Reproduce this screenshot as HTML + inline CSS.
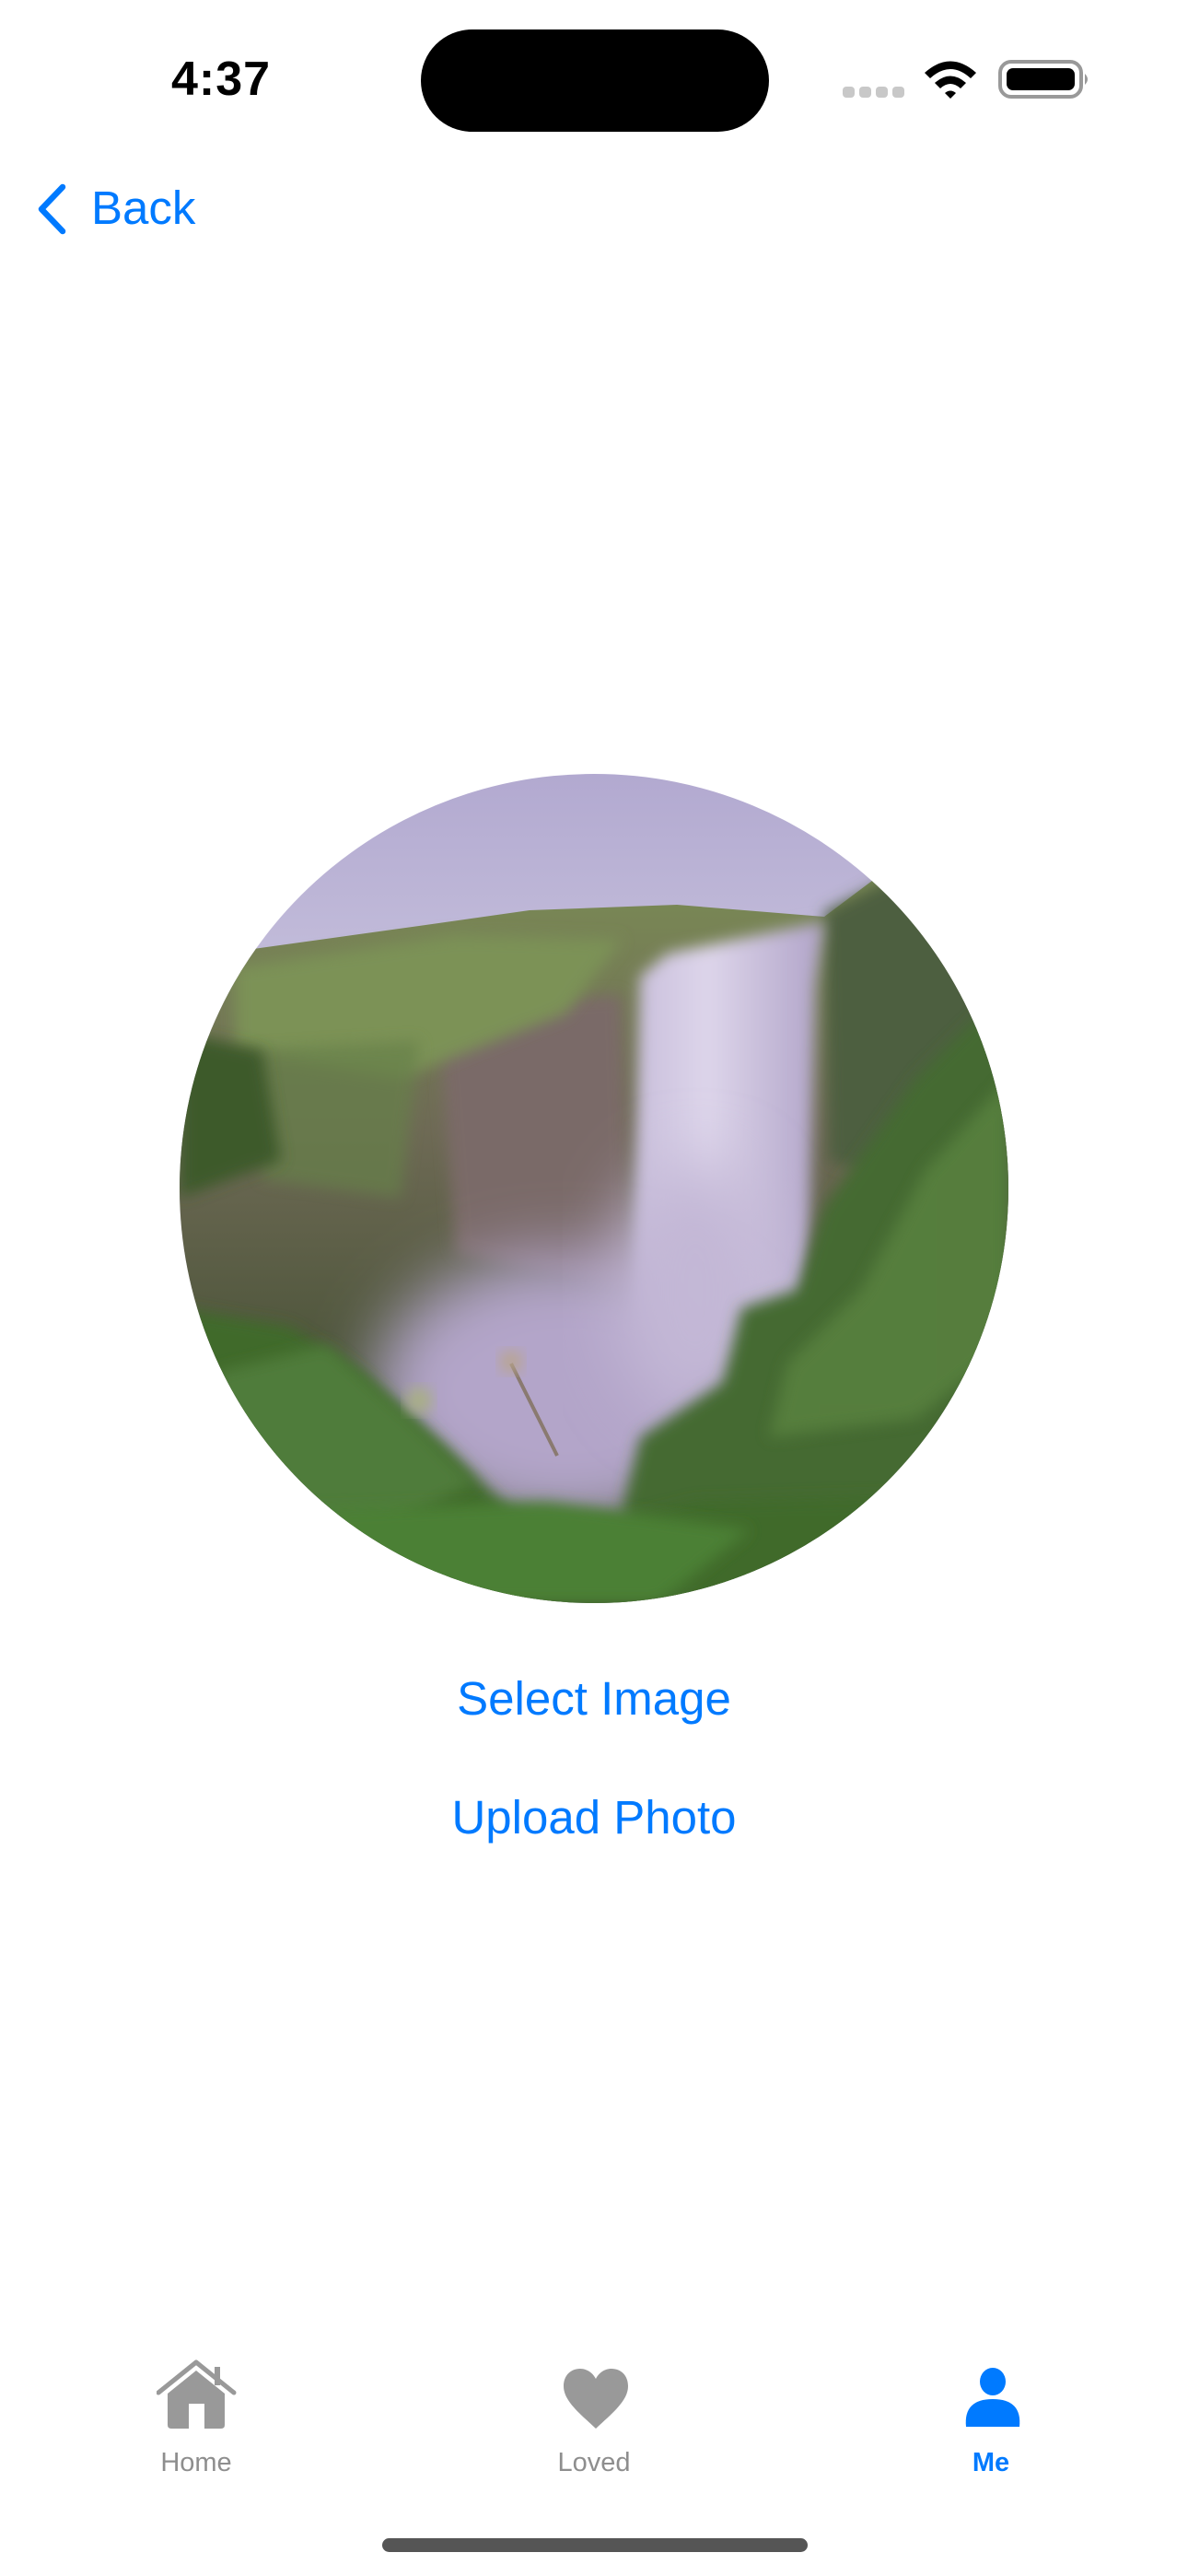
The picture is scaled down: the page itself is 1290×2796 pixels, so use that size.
<!DOCTYPE html>
<html><head><meta charset="utf-8">
<style>
html,body{margin:0;padding:0;background:#fff;}
body{width:1290px;height:2796px;position:relative;overflow:hidden;font-family:"Liberation Sans",sans-serif;}
.abs{position:absolute;}
.blue{color:#007aff;}
</style></head><body>
<div class="abs" style="left:186px;top:56px;font-size:52px;font-weight:bold;letter-spacing:1px;color:#000">4:37</div>
<div class="abs" style="left:457px;top:32px;width:378px;height:111px;border-radius:56px;background:#000"></div>
<svg class="abs" style="left:900px;top:40px" width="300" height="90" viewBox="0 0 300 90">
 <g fill="#c8c8c8"><rect x="15" y="54" width="13" height="12" rx="4"/><rect x="33" y="54" width="13" height="12" rx="4"/><rect x="51" y="54" width="13" height="12" rx="4"/><rect x="69" y="54" width="13" height="12" rx="4"/></g>
 <path d="M104 39 Q132 14 160 39 L154 45 Q132 25 110 45Z" fill="#000"/>
 <path d="M115 50 Q132 35 149 50 L143 56 Q132 46 121 56Z" fill="#000"/>
 <path d="M126 61 Q132 56 138 61 L132 67Z" fill="#000"/>
 <rect x="186" y="27" width="88" height="38" rx="12" fill="none" stroke="#999" stroke-width="4"/>
 <rect x="193" y="34" width="74" height="24" rx="7" fill="#000"/>
 <path d="M278 40 q6 6 0 12z" fill="#999"/>
</svg>
<svg class="abs" style="left:36px;top:198px" width="44" height="60" viewBox="0 0 44 60"><path d="M32 5 L9 29 L32 53" fill="none" stroke="#007aff" stroke-width="6.5" stroke-linecap="round" stroke-linejoin="round"/></svg>
<div class="abs blue" style="left:99px;top:196px;font-size:51px">Back</div>

<svg class="abs" style="left:195px;top:840px" width="900" height="900" viewBox="0 0 900 900">
 <defs>
  <clipPath id="c"><circle cx="450" cy="450" r="450"/></clipPath>
  <filter id="b" x="-20%" y="-20%" width="140%" height="140%"><feGaussianBlur stdDeviation="8"/></filter>
  <filter id="b2" x="-30%" y="-30%" width="160%" height="160%"><feGaussianBlur stdDeviation="35"/></filter>
  <linearGradient id="sky" x1="0" y1="0" x2="0" y2="1"><stop offset="0" stop-color="#b2a9d0"/><stop offset=".25" stop-color="#c4bedb"/><stop offset="1" stop-color="#cfcbdf"/></linearGradient>
  <linearGradient id="wf" x1="0" y1="0" x2="1" y2="0"><stop offset="0" stop-color="#c8bedb"/><stop offset=".4" stop-color="#ddd5ea"/><stop offset="1" stop-color="#b0a3c8"/></linearGradient>
  <linearGradient id="lc" x1="0" y1="0" x2="0" y2="1"><stop offset="0" stop-color="#7a8a55"/><stop offset=".35" stop-color="#6e6a55"/><stop offset=".7" stop-color="#4a5338"/><stop offset="1" stop-color="#3d4a30"/></linearGradient>
 </defs>
 <g clip-path="url(#c)">
  <rect width="900" height="900" fill="url(#sky)"/>
  <path d="M0 200 L80 190 L260 165 L380 148 L540 142 L700 155 L760 110 L900 200 L900 900 L0 900Z" fill="url(#lc)"/>
  <path d="M280 250 L480 240 L490 560 L300 520Z" fill="#7a6a68" filter="url(#b)"/>
  <path d="M60 210 L300 175 L480 180 L420 260 L240 330 L60 300Z" fill="#7b9256" filter="url(#b)"/>
  <path d="M80 300 L260 290 L240 460 L90 440Z" fill="#66804a" filter="url(#b)" opacity=".7"/>
  <path d="M0 280 L90 300 L110 420 L0 460Z" fill="#3e5a2c" filter="url(#b)"/>
  <path d="M700 150 L780 110 L900 180 L900 480 L705 420Z" fill="#4d5e40" filter="url(#b)"/>
  <path d="M500 220 L530 195 L700 160 L690 230 L680 640 L490 640Z" fill="url(#wf)" filter="url(#b)"/>
  <ellipse cx="420" cy="670" rx="210" ry="150" fill="#b3a5c9" filter="url(#b2)"/>
  <ellipse cx="560" cy="560" rx="90" ry="140" fill="#c3b7d6" filter="url(#b2)"/>
  <path d="M900 230 L800 330 L700 470 L670 560 L610 580 L590 660 L500 720 L480 800 L540 900 L900 900Z" fill="#456a30" filter="url(#b)"/>
  <path d="M900 330 L810 430 L740 560 L660 640 L640 720 L800 700 L900 620Z" fill="#5a833f" filter="url(#b)" opacity=".8"/>
  <path d="M0 580 L120 600 L200 650 L290 730 L360 800 L480 810 L560 790 L900 780 L900 900 L0 900Z" fill="#3f6a2c" filter="url(#b)"/>
  <path d="M40 650 L160 620 L250 700 L320 770 L200 830 L40 790Z" fill="#507c3a" filter="url(#b)"/>
  <path d="M120 800 L400 790 L620 820 L520 900 L120 900Z" fill="#4b8035" filter="url(#b)"/>
  <path d="M360 640 L410 740" stroke="#8a7a70" stroke-width="4" fill="none"/>
  <circle cx="360" cy="638" r="12" fill="#b9a58c" filter="url(#b)"/>
  <circle cx="260" cy="680" r="14" fill="#a9b083" filter="url(#b)"/>
 </g>
</svg>

<div class="abs blue" style="left:0;width:1290px;text-align:center;top:1814px;font-size:51px">Select Image</div>
<div class="abs blue" style="left:0;width:1290px;text-align:center;top:1943px;font-size:51px">Upload Photo</div>

<svg class="abs" style="left:170px;top:2560px" width="88" height="80" viewBox="0 0 88 80">
 <path d="M2 37 L43 4 L84 37" fill="none" stroke="#999" stroke-width="5" stroke-linecap="round" stroke-linejoin="round"/>
 <rect x="63" y="9" width="6" height="20" fill="#999"/>
 <path d="M12 38 L43 13 L74 38 L74 72 Q74 76 70 76 L16 76 Q12 76 12 72Z" fill="#999"/>
 <rect x="35" y="49" width="17" height="27" fill="#fff"/>
</svg>
<svg class="abs" style="left:610px;top:2570px" width="74" height="68" viewBox="0 0 74 68"><path d="M37 66 C20 50 2 36 2 20 C2 8 10 1 20 1 C28 1 34 6 37 12 C40 6 46 1 54 1 C64 1 72 8 72 20 C72 36 54 50 37 66Z" fill="#999"/></svg>
<svg class="abs" style="left:1046px;top:2570px" width="64" height="66" viewBox="0 0 64 66"><ellipse cx="32" cy="15" rx="14" ry="15" fill="#007aff"/><path d="M3 64 Q0 34 32 34 Q64 34 61 64Z" fill="#007aff"/></svg>
<div class="abs" style="left:113px;width:200px;text-align:center;top:2657px;font-size:29px;color:#8e8e8e">Home</div>
<div class="abs" style="left:545px;width:200px;text-align:center;top:2657px;font-size:29px;color:#8e8e8e">Loved</div>
<div class="abs blue" style="left:976px;width:200px;text-align:center;top:2657px;font-size:29px;font-weight:bold">Me</div>
<div class="abs" style="left:415px;top:2755px;width:462px;height:15px;border-radius:8px;background:#555"></div>
</body></html>
